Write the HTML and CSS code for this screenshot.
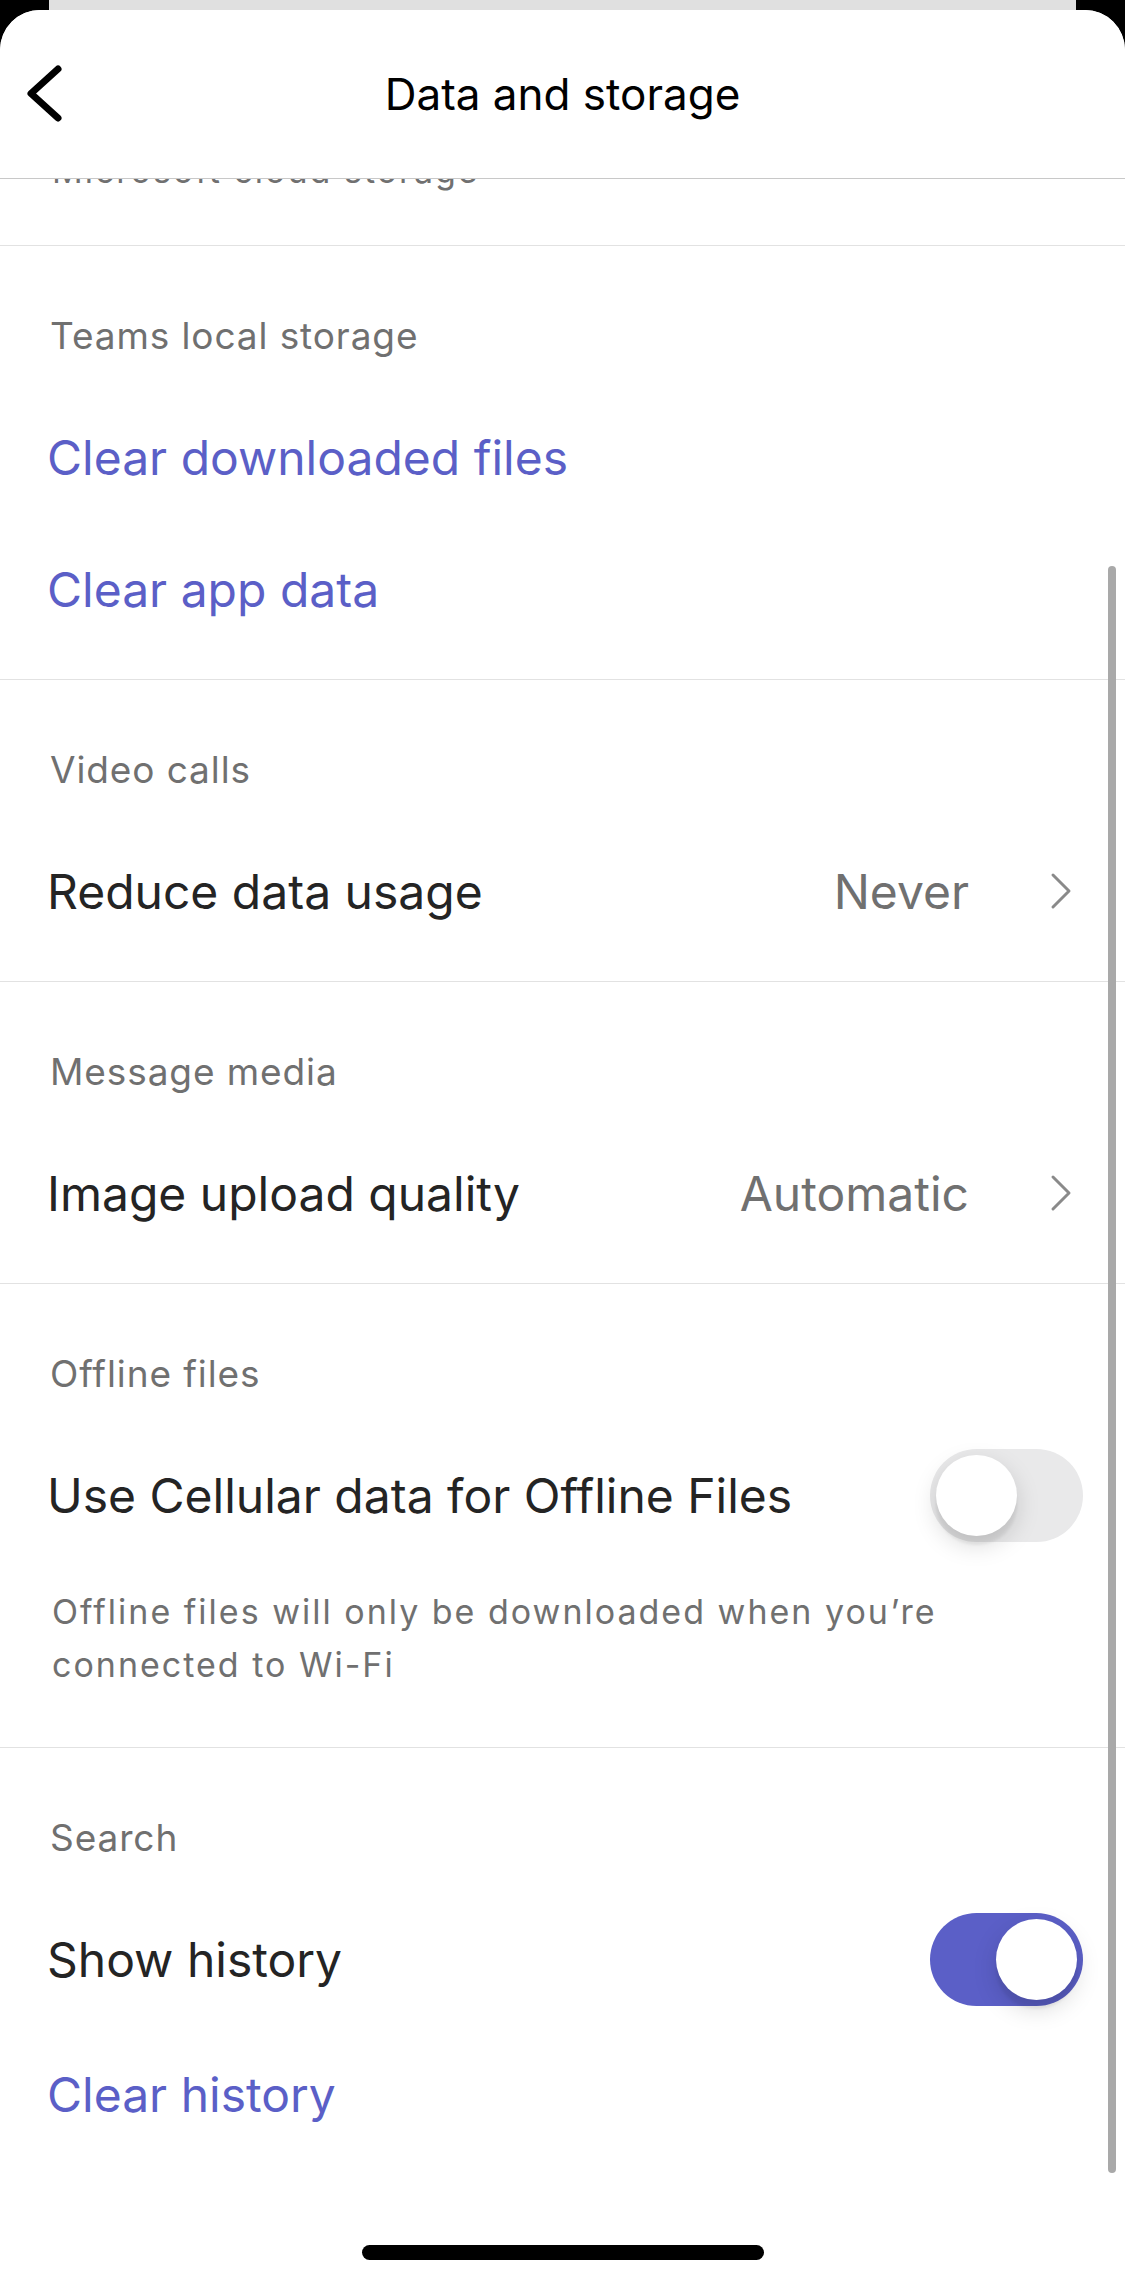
FILE: index.html
```html
<!DOCTYPE html>
<html lang="en">
<head>
  <meta charset="UTF-8">
  <meta name="viewport" content="width=device-width, initial-scale=1.0">
  <title>Data and storage</title>
  <link rel="stylesheet" href="styles.css">
</head>
<body>
  <div class="device">
    <!-- sheet underneath, peeking at the top -->
    <div class="behind"></div>

    <div class="sheet">
      <header class="nav">
        <a href="#" class="nav-back" aria-label="Back">
          <svg width="42" height="60" viewBox="0 0 42 60">
            <path d="M34 5 L7 29.5 L34 54" fill="none" stroke="#000" stroke-width="7" stroke-linecap="round" stroke-linejoin="round"/>
          </svg>
        </a>
        <h1 class="nav-title">Data and storage</h1>
        <span></span>
      </header>

      <main class="settings">
        <div class="settings-list">
          <!-- previous group, scrolled under the header -->
          <section class="group group--cut">
            <p class="hint hint--cut">Microsoft cloud storage</p>
          </section>

          <section class="group">
            <h2 class="group-label">Teams local storage</h2>
            <div class="row row--link">Clear downloaded files</div>
            <div class="row row--link">Clear app data</div>
          </section>

          <section class="group">
            <h2 class="group-label">Video calls</h2>
            <div class="row">
              <span>Reduce data usage</span>
              <span class="row-value">Never</span>
              <svg class="chevron" width="24" height="38" viewBox="0 0 24 38">
                <path d="M4 3 L20 19 L4 35" fill="none" stroke="#8a8a8a" stroke-width="3" stroke-linecap="round" stroke-linejoin="round"/>
              </svg>
            </div>
          </section>

          <section class="group">
            <h2 class="group-label">Message media</h2>
            <div class="row">
              <span>Image upload quality</span>
              <span class="row-value">Automatic</span>
              <svg class="chevron" width="24" height="38" viewBox="0 0 24 38">
                <path d="M4 3 L20 19 L4 35" fill="none" stroke="#8a8a8a" stroke-width="3" stroke-linecap="round" stroke-linejoin="round"/>
              </svg>
            </div>
          </section>

          <section class="group">
            <h2 class="group-label">Offline files</h2>
            <div class="row">
              <span>Use Cellular data for Offline Files</span>
              <div class="toggle"><div class="toggle-knob"></div></div>
            </div>
            <p class="hint">Offline files will only be downloaded when you’re connected to Wi-Fi</p>
          </section>

          <section class="group">
            <h2 class="group-label">Search</h2>
            <div class="row">
              <span>Show history</span>
              <div class="toggle toggle--on"><div class="toggle-knob"></div></div>
            </div>
            <div class="row row--link row--last">Clear history</div>
          </section>
        </div>

        <div class="scrollbar"></div>
      </main>
    </div>

    <div class="home-indicator"></div>
  </div>
</body>
</html>
```

FILE: styles.css
```css
/* Global Styles */
* {
  box-sizing: border-box;
}

body {
  margin: 0;
  padding: 0;
  background-color: #000;
  font-family: "Inter", "Roboto", sans-serif;
  color: #242424;
}

.device {
  position: relative;
  width: 1125px;
  height: 2284px;
  overflow: hidden;
  background-color: #000;
}

.behind {
  height: 10px;
  margin: 0 49px;
  background-color: #e0e0e0;
}

.sheet {
  display: flex;
  flex-direction: column;
  height: 2274px;
  background-color: #fff;
  border-radius: 40px 40px 0 0;
  overflow: hidden;
}

/* Navigation bar */
.nav {
  display: grid;
  grid-template-columns: 1fr auto 1fr;
  align-items: center;
  height: 169px;
  flex-shrink: 0;
  border-bottom: 1px solid #c8c8c8;
  background-color: #fff;
  position: relative;
  z-index: 1;
}

.nav-back {
  justify-self: start;
  display: flex;
  margin-left: 24px;
}

.nav-title {
  margin: 0;
  font-size: 44px;
  font-weight: 400;
  line-height: 60px;
  color: #000;
}

/* Settings list */
.settings {
  position: relative;
  flex: 1;
  overflow: hidden;
}

.settings-list {
  margin-top: -35px;
}

.group {
  padding: 66px 0 24px;
}

.group + .group {
  border-top: 1px solid #e2e2e2;
}

.group--cut {
  padding-top: 0;
}

.group-label {
  margin: 0 0 31px;
  padding-left: 50px;
  font-size: 37px;
  font-weight: 400;
  line-height: 48px;
  letter-spacing: 0.9px;
  color: #707070;
}

.row {
  display: flex;
  align-items: center;
  height: 132px;
  padding: 0 42px 0 47px;
  font-size: 48px;
  white-space: nowrap;
}

.row--link {
  color: #5b5fc7;
}

.row--last {
  margin-top: 3px;
}

.row-value {
  margin-left: auto;
  color: #707070;
}

.chevron {
  margin-left: 80px;
  margin-right: 10px;
}

.hint {
  margin: 24px 0 32px;
  padding: 0 60px 0 52px;
  font-size: 34px;
  line-height: 53px;
  letter-spacing: 2px;
  color: #707070;
}

.hint--cut {
  margin: 0 0 24px;
}

/* Switches */
.toggle {
  display: flex;
  align-items: center;
  margin-left: auto;
  width: 153px;
  height: 93px;
  padding: 0 6px;
  border-radius: 47px;
  background-color: #e9e9ea;
}

.toggle--on {
  justify-content: flex-end;
  background-color: #5b5fc7;
}

.toggle-knob {
  width: 81px;
  height: 81px;
  border-radius: 50%;
  background-color: #fff;
  box-shadow: 0 9px 24px rgba(0, 0, 0, 0.15), 0 9px 3px rgba(0, 0, 0, 0.06);
}

/* overlays */
.scrollbar {
  position: absolute;
  top: 387px;
  right: 9px;
  width: 8px;
  height: 1607px;
  border-radius: 4px;
  background-color: #a9a9a9;
}

.home-indicator {
  position: absolute;
  left: 362px;
  bottom: 24px;
  width: 402px;
  height: 15px;
  border-radius: 8px;
  background-color: #000;
}
```
